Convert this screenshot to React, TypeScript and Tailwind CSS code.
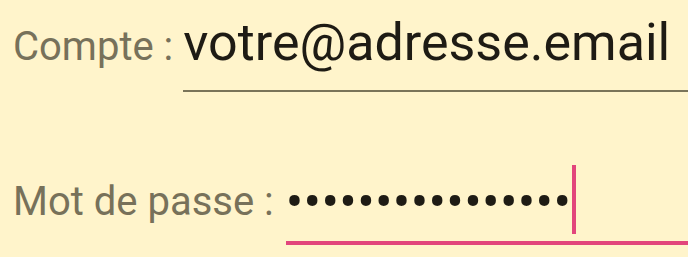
import React from "react";

export default function App() {
  return (
    <div className="w-[688px] h-[257px] overflow-hidden bg-[#FFF4CB] font-['Roboto',sans-serif] pl-[13px]">
      <div className="flex items-baseline pt-[17px]">
        <span className="text-[40px] leading-[40px] text-[#77715A] whitespace-nowrap">Compte :</span>
        <div className="ml-[10px] flex-1 border-b-2 border-[#7A7459] pb-[21px] text-[52px] leading-[52px] text-[#1E1B14] whitespace-nowrap">
          votre@adresse.email
        </div>
      </div>
      <div className="flex items-end pt-[73px]">
        <span className="mb-[23px] text-[40px] leading-[40px] text-[#77715A] whitespace-nowrap">Mot de passe :</span>
        <div className="ml-[12px] flex-1 flex items-end border-b-4 border-[#E2457C] pb-[7px]">
          <span className="mb-[5px] text-[52px] leading-[52px] tracking-[0.3px] text-[#1E1B14] whitespace-nowrap">••••••••••••••••</span>
          <span className="ml-[1px] w-[4px] h-[69px] bg-[#E2457C]" />
        </div>
      </div>
    </div>
  );
}
